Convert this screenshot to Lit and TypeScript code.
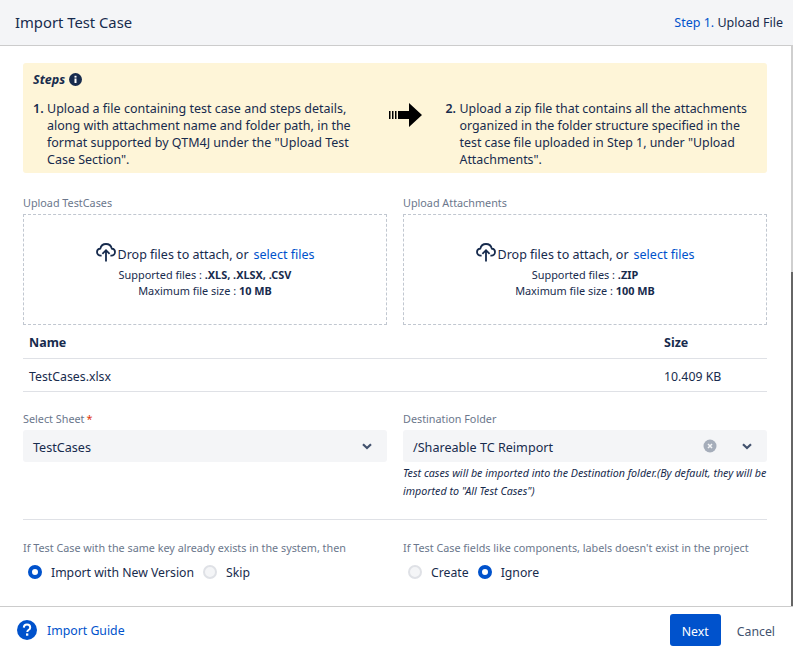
import { LitElement, html, css } from 'lit';
import { customElement } from 'lit/decorators.js';

const cloud = html`<svg class="cloud" viewBox="0 0 20 19" width="20" height="19" fill="none" stroke="#172b4d" stroke-width="1.8">
  <path d="M5.6 12.6H4.8C2.6 12.6 1 11 1 9.1 1 7.2 2.5 5.7 4.3 5.6 4.9 3 7.2 1 10 1c2.9 0 5.2 2 5.8 4.6 1.8.1 3.2 1.6 3.2 3.5 0 1.9-1.6 3.5-3.7 3.5h-.9"/>
  <path d="M10 18.500V7.500M6.400 10.800 10 7.200l3.600 3.600"/>
</svg>`;

const chevron = html`<svg class="chev" viewBox="0 0 10 7" width="10" height="7" fill="none" stroke="#42526e" stroke-width="2.2"><path d="M1 1.200 5 5l4-3.800"/></svg>`;

@customElement('drop-zone')
export class DropZone extends LitElement {
    static properties = {
        label: { type: String },
        types: { type: String },
        max: { type: String },
    };
    declare label: string;
    declare types: string;
    declare max: string;

    static styles = css`
        :host {
            display: block;
        }
        .label {
            font-size: 10.800px;
            line-height: 16px;
            color: #6b778c;
            margin-bottom: 3px;
        }
        .zone {
            box-sizing: border-box;
            height: 111px;
            border: 1px dashed #c1c7d0;
            display: flex;
            flex-direction: column;
            align-items: center;
            padding-top: 30px;
        }
        .main {
            display: flex;
            align-items: flex-start;
            font-size: 12.500px;
            line-height: 20px;
            color: #172b4d;
        }
        .cloud {
            margin-top: -2px;
            margin-right: 2px;
        }
        .main a {
            color: #0052cc;
            margin-left: 5px;
        }
        .info {
            font-size: 10.900px;
            line-height: 16px;
            color: #172b4d;
            text-align: center;
        }
        .first {
            margin-top: 2px;
        }
        b {
            font-weight: 700;
        }
    `;

    render() {
        return html`
            <div class="label">${this.label}</div>
            <div class="zone">
                <div class="main">${cloud}<span>Drop files to attach, or</span><a>select files</a></div>
                <div class="info first">Supported files : <b>${this.types}</b></div>
                <div class="info">Maximum file size : <b>${this.max}</b></div>
            </div>
        `;
    }
}

@customElement('app-root')
export class AppRoot extends LitElement {
    static styles = css`
        :host {
            display: block;
            font-family: 'Noto Sans', 'Open Sans', sans-serif;
            color: #172b4d;
            background: #fff;
        }
        .page {
            position: relative;
            height: 653px;
            overflow: hidden;
            display: flex;
            flex-direction: column;
        }
        .head {
            box-sizing: border-box;
            height: 46px;
            flex: none;
            display: flex;
            align-items: center;
            justify-content: space-between;
            padding: 0 10px 0 15px;
            background: #f4f5f7;
            border-bottom: 1px solid #ccc;
        }
        .title {
            font-size: 14.800px;
            padding-bottom: 1px;
        }
        .step {
            font-size: 12.500px;
        }
        .step span {
            color: #0052cc;
        }
        .body {
            flex: 1;
            min-height: 0;
            padding: 17px 26px 0 23px;
        }
        .steps {
            box-sizing: border-box;
            height: 110px;
            background: #fef5d8;
            border-radius: 3px;
            padding: 7px 10px 0;
            font-size: 12.500px;
            line-height: 17px;
            margin-bottom: 22px;
        }
        .steps-title {
            display: flex;
            align-items: center;
            gap: 4px;
            font-weight: 700;
            font-style: italic;
            height: 18px;
            margin-bottom: 12px;
        }
        .steps-row {
            display: flex;
        }
        .step-item {
            display: flex;
        }
        .step-item.one {
            width: 326px;
        }
        .step-item.two {
            width: 312px;
            font-size: 12.400px;
        }
        .step-item b {
            flex: none;
            width: 14px;
            font-weight: 600;
        }
        .arrow {
            flex: none;
            width: 87px;
            padding: 3px 0 0 30px;
            box-sizing: border-box;
        }
        .cols {
            display: grid;
            grid-template-columns: 364px 364px;
            gap: 16px;
        }
        .files {
            display: grid;
            grid-template-columns: 635px 1fr;
            font-size: 12.300px;
            margin-top: 1px;
        }
        .files div {
            box-sizing: border-box;
            display: flex;
            align-items: center;
            padding: 2px 0 0 6px;
            border-bottom: 1px solid #dfe1e6;
        }
        .files .th {
            height: 33px;
            padding-top: 0;
            font-weight: 700;
            font-size: 12.500px;
        }
        .files .td {
            height: 33px;
        }
        .fields {
            margin-top: 19px;
        }
        .flabel {
            font-size: 10.800px;
            line-height: 16px;
            color: #6b778c;
            margin-bottom: 3px;
        }
        .flabel i {
            color: #de350b;
            font-style: normal;
            margin-left: 2px;
        }
        .select {
            box-sizing: border-box;
            height: 32px;
            background: #f4f5f7;
            border-radius: 3px;
            display: flex;
            align-items: center;
            padding: 0 15px 0 10px;
            font-size: 12.600px;
        }
        .select span {
            flex: 1;
            padding-top: 2px;
        }
        .clear {
            margin-right: 25px;
        }
        .hint {
            font-size: 10.700px;
            font-style: italic;
            line-height: 18px;
            padding-top: 2px;
        }
        .rule {
            border-top: 1px solid #dfe1e6;
            margin-top: 19px;
        }
        .opts {
            margin-top: 20px;
        }
        .radios {
            display: flex;
            align-items: center;
            font-size: 12.250px;
            margin-top: 6px;
            padding-left: 5px;
            height: 20px;
        }
        .radio {
            box-sizing: border-box;
            width: 14px;
            height: 14px;
            border-radius: 50%;
            background: #f4f5f7;
            border: 2px solid #dfe1e6;
            margin-right: 9px;
            flex: none;
        }
        .radio.on {
            background: #fff;
            border: 4.500px solid #0052cc;
        }
        .radios label {
            margin-right: 9px;
        }
        .foot {
            box-sizing: border-box;
            height: 47px;
            flex: none;
            border-top: 1px solid #ccc;
            display: flex;
            align-items: center;
            padding: 0 18px 0 17px;
            font-size: 12.300px;
        }
        .guide {
            flex: 1;
            display: flex;
            align-items: center;
            gap: 10px;
            color: #0052cc;
        }
        .next {
            box-sizing: border-box;
            width: 51px;
            height: 32px;
            border: 0;
            padding: 2px 0 0;
            border-radius: 3px;
            background: #0052cc;
            color: #fff;
            font: inherit;
            margin-right: 16px;
        }
        .cancel {
            color: #42526e;
            padding-top: 2px;
        }
        .scroll {
            position: absolute;
            right: 0;
            top: 45px;
            width: 2px;
            height: 561px;
            background: #cfcfcf;
        }
        .thumb {
            position: absolute;
            left: 0;
            top: 227px;
            width: 2px;
            height: 334px;
            background: #666;
        }
    `;

    render() {
        return html`
            <div class="page">
                <div class="head">
                    <div class="title">Import Test Case</div>
                    <div class="step"><span>Step 1.</span> Upload File</div>
                </div>
                <div class="body">
                    <div class="steps">
                        <div class="steps-title">Steps
                            <svg width="13" height="13" viewBox="0 0 13 13"><circle cx="6.500" cy="6.500" r="6.500" fill="#172b4d"/><rect x="5.500" y="5.500" width="2" height="4.500" fill="#fff"/><rect x="5.500" y="2.800" width="2" height="1.800" fill="#fff"/></svg>
                        </div>
                        <div class="steps-row">
                            <div class="step-item one"><b>1.</b><div>Upload a file containing test case and steps details, along with attachment name and folder path, in the format supported by QTM4J under the "Upload Test Case Section".</div></div>
                            <div class="arrow">
                                <svg width="34" height="24" viewBox="0 0 34 24" fill="#000"><path d="M1 8h1.500v8H1zM4 8h1.500v8H4zM7 8h1.500v8H7zM10 8h11V0l13 12-13 12v-8H10z"/></svg>
                            </div>
                            <div class="step-item two"><b>2.</b><div>Upload a zip file that contains all the attachments organized in the folder structure specified in the test case file uploaded in Step 1, under "Upload Attachments".</div></div>
                        </div>
                    </div>
                    <div class="cols">
                        <drop-zone label="Upload TestCases" types=".XLS, .XLSX, .CSV" max="10 MB"></drop-zone>
                        <drop-zone label="Upload Attachments" types=".ZIP" max="100 MB"></drop-zone>
                    </div>
                    <div class="files">
                        <div class="th">Name</div><div class="th">Size</div>
                        <div class="td">TestCases.xlsx</div><div class="td">10.409 KB</div>
                    </div>
                    <div class="cols fields">
                        <div>
                            <div class="flabel">Select Sheet<i>*</i></div>
                            <div class="select"><span>TestCases</span>${chevron}</div>
                        </div>
                        <div>
                            <div class="flabel">Destination Folder</div>
                            <div class="select">
                                <span>/Shareable TC Reimport</span>
                                <svg class="clear" width="14" height="14" viewBox="0 0 14 14"><circle cx="7" cy="7" r="6.500" fill="#a5adba"/><path d="M5 5l4 4M9 5l-4 4" stroke="#f4f5f7" stroke-width="1.500"/></svg>
                                ${chevron}
                            </div>
                            <div class="hint">Test cases will be imported into the Destination folder.(By default, they will be imported to "All Test Cases")</div>
                        </div>
                    </div>
                    <div class="rule"></div>
                    <div class="cols opts">
                        <div>
                            <div class="flabel">If Test Case with the same key already exists in the system, then</div>
                            <div class="radios"><div class="radio on"></div><label>Import with New Version</label><div class="radio"></div><label>Skip</label></div>
                        </div>
                        <div>
                            <div class="flabel">If Test Case fields like components, labels doesn't exist in the project</div>
                            <div class="radios"><div class="radio"></div><label>Create</label><div class="radio on"></div><label>Ignore</label></div>
                        </div>
                    </div>
                </div>
                <div class="foot">
                    <div class="guide">
                        <svg width="20" height="20" viewBox="0 0 20 20"><circle cx="10" cy="10" r="10" fill="#0052cc"/><path d="M6.800 7.600C6.900 5.700 8.200 4.600 10 4.600c1.900 0 3.200 1.100 3.200 2.800 0 1.300-.7 2-1.700 2.600-.9.600-1.200 1-1.200 1.900" fill="none" stroke="#fff" stroke-width="2"/><rect x="9" y="13.400" width="2.300" height="2.300" fill="#fff"/></svg>
                        <span>Import Guide</span>
                    </div>
                    <button class="next">Next</button>
                    <span class="cancel">Cancel</span>
                </div>
                <div class="scroll"><div class="thumb"></div></div>
            </div>
        `;
    }
}
